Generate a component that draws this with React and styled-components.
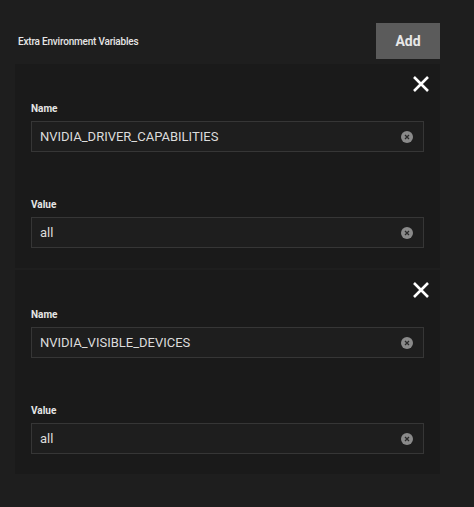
import React from "react";
import styled, { createGlobalStyle } from "styled-components";

const Global = createGlobalStyle`
  body { margin: 0; background: #1e1e1e; font-family: Roboto, "Liberation Sans", sans-serif; }
`;
const Page = styled.div`
  width: 474px; height: 507px; box-sizing: border-box; padding: 23px 34px 0 15px;
`;
const Header = styled.div`
  display: flex; justify-content: space-between; align-items: center; height: 36px; margin-bottom: 5px;
`;
const Title = styled.div`
  color: #e6e6e6; font-size: 10px; font-weight: 500; padding-left: 3px; letter-spacing: -0.2px;
`;
const AddButton = styled.button`
  width: 64px; height: 36px; border: 0; background: #5b5b5b; color: #e8e8e8;
  font: 700 14px Roboto, "Liberation Sans", sans-serif; cursor: pointer;
`;
const Card = styled.div`
  background: #1a1a1a; padding: 8px 16px 20px; margin-bottom: 2px;
  display: flex; flex-direction: column;
`;
const CloseRow = styled.div`
  display: flex; justify-content: flex-end; margin-right: -9px; height: 27px;
`;
const Label = styled.div`
  color: #e6e6e6; font-size: 10px; font-weight: 700; margin: ${p => p.$top}px 0 7px;
`;
const Field = styled.div`
  height: 31px; box-sizing: border-box; border: 1px solid #363636; background: #1e1e1e;
  display: flex; align-items: center; justify-content: space-between; padding: 0 10px 0 8px;
  color: #dcdcdc; font-size: 13px;
`;
const Clear = styled.span`
  width: 12px; height: 12px; border-radius: 50%; background: #8a8a8a;
  display: flex; align-items: center; justify-content: center;
`;

const X = () => (
  <svg width="24" height="24" viewBox="0 0 24 24"><path d="M5 5L19 19M19 5L5 19" stroke="#fff" strokeWidth="2.6"/></svg>
);
const ClearIcon = () => (
  <Clear><svg width="6" height="6" viewBox="0 0 6 6"><path d="M1 1L5 5M5 1L1 5" stroke="#2a2a2a" strokeWidth="1.3"/></svg></Clear>
);

const vars = [
  { name: "NVIDIA_DRIVER_CAPABILITIES", value: "all" },
  { name: "NVIDIA_VISIBLE_DEVICES", value: "all" },
];

export default function App() {
  return (
    <Page>
      <Global />
      <Header>
        <Title>Extra Environment Variables</Title>
        <AddButton>Add</AddButton>
      </Header>
      {vars.map(v => (
        <Card key={v.name}>
          <CloseRow><X /></CloseRow>
          <Label $top={4}>Name</Label>
          <Field>{v.name}<ClearIcon /></Field>
          <Label $top={47}>Value</Label>
          <Field>{v.value}<ClearIcon /></Field>
        </Card>
      ))}
    </Page>
  );
}
